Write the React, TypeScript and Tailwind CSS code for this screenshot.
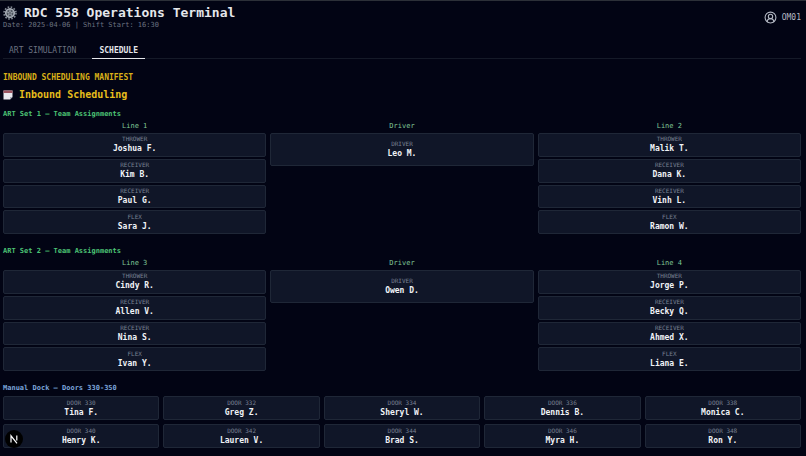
import { CircleUserRound } from 'lucide-react'

type Slot = { role: string; name: string }

const artSets = [
  {
    title: 'ART Set 1 — Team Assignments',
    left: {
      label: 'Line 1',
      crew: [
        { role: 'Thrower', name: 'Joshua F.' },
        { role: 'Receiver', name: 'Kim B.' },
        { role: 'Receiver', name: 'Paul G.' },
        { role: 'Flex', name: 'Sara J.' }
      ]
    },
    driver: 'Leo M.',
    right: {
      label: 'Line 2',
      crew: [
        { role: 'Thrower', name: 'Malik T.' },
        { role: 'Receiver', name: 'Dana K.' },
        { role: 'Receiver', name: 'Vinh L.' },
        { role: 'Flex', name: 'Ramon W.' }
      ]
    }
  },
  {
    title: 'ART Set 2 — Team Assignments',
    left: {
      label: 'Line 3',
      crew: [
        { role: 'Thrower', name: 'Cindy R.' },
        { role: 'Receiver', name: 'Allen V.' },
        { role: 'Receiver', name: 'Nina S.' },
        { role: 'Flex', name: 'Ivan Y.' }
      ]
    },
    driver: 'Owen D.',
    right: {
      label: 'Line 4',
      crew: [
        { role: 'Thrower', name: 'Jorge P.' },
        { role: 'Receiver', name: 'Becky Q.' },
        { role: 'Receiver', name: 'Ahmed X.' },
        { role: 'Flex', name: 'Liana E.' }
      ]
    }
  }
]

const doors: Slot[] = [
  { role: 'Door 330', name: 'Tina F.' },
  { role: 'Door 332', name: 'Greg Z.' },
  { role: 'Door 334', name: 'Sheryl W.' },
  { role: 'Door 336', name: 'Dennis B.' },
  { role: 'Door 338', name: 'Monica C.' },
  { role: 'Door 340', name: 'Henry K.' },
  { role: 'Door 342', name: 'Lauren V.' },
  { role: 'Door 344', name: 'Brad S.' },
  { role: 'Door 346', name: 'Myra H.' },
  { role: 'Door 348', name: 'Ron Y.' }
]

function SlotCard({ role, name, className = '' }: Slot & { className?: string }) {
  return (
    <div className={`flex flex-col items-center justify-center rounded-xs border border-[#1f2737] bg-[#101628] ${className}`}>
      <div className="text-[6px] leading-[8px] text-[#788092] uppercase">{role}</div>
      <div className="text-[8px] leading-[11px] font-bold text-[#f1f3f7]">{name}</div>
    </div>
  )
}

function LineColumn({ label, crew }: { label: string; crew: Slot[] }) {
  return (
    <div>
      <h4 className="mb-0.5 text-center text-[7px] leading-[10px] text-[#7fc796]">{label}</h4>
      <div className="grid min-h-[101px] auto-rows-fr gap-0.5">
        {crew.map((slot) => (
          <SlotCard key={slot.name} {...slot} />
        ))}
      </div>
    </div>
  )
}

function GearIcon() {
  return (
    <svg viewBox="0 0 28 28" className="size-[14px]" aria-hidden="true">
      <circle cx="14" cy="14" r="12" fill="none" stroke="#8b929c" strokeWidth="3" strokeDasharray="3.2 3.08" />
      <circle cx="14" cy="14" r="8.5" fill="#4d535d" stroke="#a3a9b2" strokeWidth="3.5" />
      <path d="M14 14V5M14 14l8.5-3M14 14l5.5 7.5M14 14l-5.5 7.5M14 14l-8.5-3" stroke="#a3a9b2" strokeWidth="2" />
      <circle cx="14" cy="14" r="3.5" fill="#9298a2" />
      <circle cx="14" cy="14" r="1.5" fill="#30343d" />
    </svg>
  )
}

function CalendarIcon() {
  return (
    <svg viewBox="0 0 20 20" className="size-[10px]" aria-hidden="true">
      <path d="M1 1h18v13l-5 5H1z" fill="#e9e9ee" />
      <path d="M1 1h18v5H1z" fill="#9c5560" />
      <path d="M14 19v-5h5z" fill="#a9acb8" />
    </svg>
  )
}

export default function App() {
  return (
    <div className="min-h-screen border-t border-[#2c3038] bg-[#020414] pr-[5px] pb-2 pl-[3px] font-['DejaVu_Sans_Mono','Liberation_Mono',monospace]">
      <header className="flex items-center justify-between pt-1">
        <div>
          <h1 className="flex items-center gap-[7px] text-[13px] leading-[15px] font-bold text-[#e5e7eb]">
            <GearIcon />
            RDC 558 Operations Terminal
          </h1>
          <p className="text-[7px] leading-[10px] text-[#6b7280]">Date: 2025-04-06 | Shift Start: 16:30</p>
        </div>
        <div className="flex items-center gap-[5px] text-[8px] leading-[12px] text-[#b4b9c4]">
          <CircleUserRound className="size-[13px]" />
          OM01
        </div>
      </header>

      <nav className="mt-3 flex border-b border-[#151a28] text-[8px] leading-[10px]">
        <button className="px-[6px] pt-[4px] pb-[2px] text-[#6b7280]">ART SIMULATION</button>
        <button className="-mb-px ml-[10px] border-b border-[#e5e7eb] px-[7px] pt-[4px] pb-[2px] font-bold text-[#e5e7eb]">SCHEDULE</button>
      </nav>

      <main>
        <h2 className="mt-[14px] text-[8px] leading-[10px] font-bold text-[#d9b018]">INBOUND SCHEDULING MANIFEST</h2>
        <h3 className="mt-[5px] flex items-center gap-[6px] text-[10px] leading-[14px] font-bold text-[#e6bd1c]">
          <CalendarIcon />
          Inbound Scheduling
        </h3>

        {artSets.map((set) => (
          <section key={set.title} className="mt-[7px] mb-[12px]">
            <h3 className="mb-[2px] text-[7px] leading-[10px] font-bold text-[#4cc374]">{set.title}</h3>
            <div className="grid grid-cols-3 gap-1">
              <LineColumn {...set.left} />
              <div>
                <h4 className="mb-0.5 text-center text-[7px] leading-[10px] text-[#7fc796]">Driver</h4>
                <SlotCard role="Driver" name={set.driver} className="py-[6px]" />
              </div>
              <LineColumn {...set.right} />
            </div>
          </section>
        ))}

        <section>
          <h3 className="mb-[3px] text-[7px] leading-[10px] font-bold text-[#7ba4dc]">Manual Dock – Doors 330-350</h3>
          <div className="grid grid-cols-5 gap-1">
            {doors.map((door) => (
              <SlotCard key={door.role} {...door} className="min-h-6" />
            ))}
          </div>
        </section>
      </main>

      <button aria-label="Open Next.js Dev Tools" className="fixed bottom-[8px] left-[5px] flex size-[18px] items-center justify-center rounded-full bg-black">
        <svg viewBox="0 0 18 18" className="size-[18px]" fill="none" aria-hidden="true">
          <path d="M6 12.5V5.8l6 7.5" stroke="#fff" strokeWidth="1.2" />
          <path d="M11.800 5.500v5" stroke="#fff" strokeWidth="1.2" />
        </svg>
      </button>
    </div>
  )
}
